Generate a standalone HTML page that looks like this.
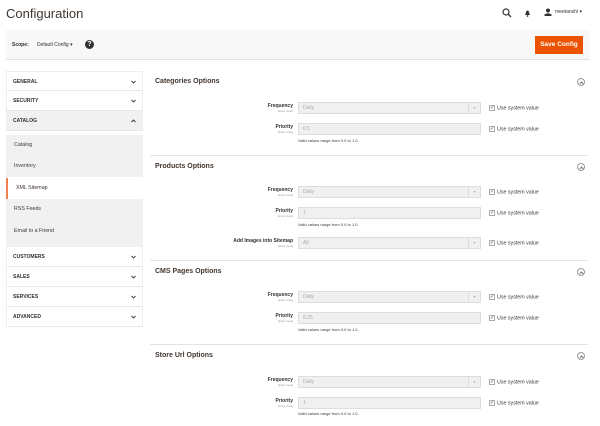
<!DOCTYPE html>
<html><head><meta charset="utf-8"><style>
*{margin:0;padding:0;box-sizing:border-box}
body{width:600px;height:426px;background:#fff;font-family:"Liberation Sans",sans-serif;color:#303030;position:relative;overflow:hidden}
.a{position:absolute}
.t{font-size:13px;left:6px;top:6px;color:#41362f}
.bar{left:6px;top:30px;width:584px;height:30px;background:#f8f8f8;border-bottom:1px solid #e3e3e3}
.btn{left:535px;top:36px;width:48px;height:18px;background:#eb5202;color:#fff;font-size:6.5px;font-weight:bold;text-align:center;line-height:18px}
.nav{left:6px;width:137px;height:20px;border-bottom:1px solid #e8e8e8;background:#fff;font-size:5px;font-weight:bold;line-height:20px;padding-left:6px;border-left:1px solid #eee;border-right:1px solid #eee}
.nav svg{position:absolute;right:6px;top:8px}
.sub{left:6px;width:137px;height:21px;background:#f1f1f1;font-size:5.3px;line-height:21px;padding-left:8px;color:#41362f}
.sec{left:155px;font-size:7px;font-weight:bold;color:#41362f}
.rule{left:150px;width:438px;height:1px;background:#e3e3e3}
.circ{left:577px;width:8px;height:8px;border:1px solid #999;border-radius:50%}
.circ:after{content:"";position:absolute;left:2px;top:2.6px;width:2px;height:2px;border-left:1px solid #777;border-top:1px solid #777;transform:rotate(45deg)}
.lab{width:293px;left:0;text-align:right;font-size:5px;font-weight:bold;line-height:6px}
.lab small{display:block;font-size:3px;font-weight:normal;color:#999;line-height:4px}
.inp{left:298px;width:183px;height:12px;background:#f0f0f0;border:1px solid #ddd;font-size:5px;line-height:10px;padding-left:4px;color:#aaa}
.inp .ar{position:absolute;right:0;top:0;width:12px;height:10px;border-left:1px solid #ddd;text-align:center;font-size:4px}
.cb{left:489px;font-size:5.3px;line-height:7px;color:#41362f}
.cb i{display:inline-block;width:6px;height:6px;border:1px solid #aaa;vertical-align:middle;margin-right:2px;font-style:normal;font-size:5px;line-height:4px;text-align:center}
.note{left:298px;font-size:4px;color:#41362f}
</style></head><body>
<div class="a t">Configuration</div>
<svg class="a" style="left:502px;top:8px" width="10" height="10" viewBox="0 0 10 10"><circle cx="4" cy="4" r="3" fill="none" stroke="#333" stroke-width="1.2"/><path d="M6 6L9 9" stroke="#333" stroke-width="1.3"/></svg>
<svg class="a" style="left:524px;top:9px" width="7" height="8" viewBox="0 0 7 8"><path d="M1 6C2 5 1.5 1.5 3.5 1.5S5 5 6 6Z" fill="#333"/><circle cx="3.5" cy="7" r="0.9" fill="#333"/></svg>
<svg class="a" style="left:544px;top:8px" width="8" height="8" viewBox="0 0 8 8"><circle cx="4" cy="2.5" r="2" fill="#333"/><path d="M0.5 8V6.5Q4 4 7.5 6.5V8Z" fill="#333"/></svg>
<div class="a" style="left:555px;top:9px;font-size:5px;color:#333">meetanshi ▾</div>
<div class="a bar"></div>
<div class="a" style="left:12px;top:42px;font-size:5px;font-weight:bold">Scope:</div>
<div class="a" style="left:37px;top:42px;font-size:5px">Default Config ▾</div>
<div class="a" style="left:85px;top:40px;width:9px;height:9px;border-radius:50%;background:#333;color:#fff;font-size:7px;font-weight:bold;text-align:center;line-height:9px">?</div>
<div class="a btn">Save Config</div>

<div class="a nav" style="top:71px;border-top:1px solid #eee">GENERAL<svg width="5" height="4"><path d="M0.5 1L2.5 3L4.5 1" fill="none" stroke="#333" stroke-width="0.9"/></svg></div>
<div class="a nav" style="top:91px">SECURITY<svg width="5" height="4"><path d="M0.5 1L2.5 3L4.5 1" fill="none" stroke="#333" stroke-width="0.9"/></svg></div>
<div class="a nav" style="top:111px;background:#f1f1f1">CATALOG<svg width="5" height="4"><path d="M0.5 3L2.5 1L4.5 3" fill="none" stroke="#333" stroke-width="0.9"/></svg></div>
<div class="a sub" style="top:135px">Catalog</div>
<div class="a sub" style="top:156px">Inventory</div>
<div class="a sub" style="top:178px;background:#fff;border-left:2px solid #f08050">XML Sitemap</div>
<div class="a sub" style="top:199px">RSS Feeds</div>
<div class="a sub" style="top:220px;height:27px;line-height:22px">Email to a Friend</div>
<div class="a nav" style="top:247px">CUSTOMERS<svg width="5" height="4"><path d="M0.5 1L2.5 3L4.5 1" fill="none" stroke="#333" stroke-width="0.9"/></svg></div>
<div class="a nav" style="top:267px">SALES<svg width="5" height="4"><path d="M0.5 1L2.5 3L4.5 1" fill="none" stroke="#333" stroke-width="0.9"/></svg></div>
<div class="a nav" style="top:287px">SERVICES<svg width="5" height="4"><path d="M0.5 1L2.5 3L4.5 1" fill="none" stroke="#333" stroke-width="0.9"/></svg></div>
<div class="a nav" style="top:307px">ADVANCED<svg width="5" height="4"><path d="M0.5 1L2.5 3L4.5 1" fill="none" stroke="#333" stroke-width="0.9"/></svg></div>

<div class="a sec" style="top:78px">Categories Options</div><div class="a circ" style="top:78px"></div>
<div class="a lab" style="top:103px">Frequency<small>[store view]</small></div><div class="a inp" style="top:102px">Daily<span class="ar">▾</span></div><div class="a cb" style="top:105px"><i>✓</i>Use system value</div>
<div class="a lab" style="top:124px">Priority<small>[store view]</small></div><div class="a inp" style="top:123px">0.5</div><div class="a cb" style="top:126px"><i>✓</i>Use system value</div>
<div class="a note" style="top:138px">Valid values range from 0.0 to 1.0.</div>
<div class="a rule" style="top:155px"></div>

<div class="a sec" style="top:163px">Products Options</div><div class="a circ" style="top:163px"></div>
<div class="a lab" style="top:187px">Frequency<small>[store view]</small></div><div class="a inp" style="top:186px">Daily<span class="ar">▾</span></div><div class="a cb" style="top:189px"><i>✓</i>Use system value</div>
<div class="a lab" style="top:208px">Priority<small>[store view]</small></div><div class="a inp" style="top:207px">1</div><div class="a cb" style="top:210px"><i>✓</i>Use system value</div>
<div class="a note" style="top:222px">Valid values range from 0.0 to 1.0.</div>
<div class="a lab" style="top:238px">Add Images into Sitemap<small>[store view]</small></div><div class="a inp" style="top:237px">All<span class="ar">▾</span></div><div class="a cb" style="top:240px"><i>✓</i>Use system value</div>
<div class="a rule" style="top:260px"></div>

<div class="a sec" style="top:268px">CMS Pages Options</div><div class="a circ" style="top:268px"></div>
<div class="a lab" style="top:292px">Frequency<small>[store view]</small></div><div class="a inp" style="top:291px">Daily<span class="ar">▾</span></div><div class="a cb" style="top:294px"><i>✓</i>Use system value</div>
<div class="a lab" style="top:313px">Priority<small>[store view]</small></div><div class="a inp" style="top:312px">0.25</div><div class="a cb" style="top:315px"><i>✓</i>Use system value</div>
<div class="a note" style="top:327px">Valid values range from 0.0 to 1.0.</div>
<div class="a rule" style="top:344px"></div>

<div class="a sec" style="top:352px">Store Url Options</div><div class="a circ" style="top:352px"></div>
<div class="a lab" style="top:377px">Frequency<small>[store view]</small></div><div class="a inp" style="top:376px">Daily<span class="ar">▾</span></div><div class="a cb" style="top:379px"><i>✓</i>Use system value</div>
<div class="a lab" style="top:398px">Priority<small>[store view]</small></div><div class="a inp" style="top:397px">1</div><div class="a cb" style="top:400px"><i>✓</i>Use system value</div>
<div class="a note" style="top:411px">Valid values range from 0.0 to 1.0.</div>
</body></html>
